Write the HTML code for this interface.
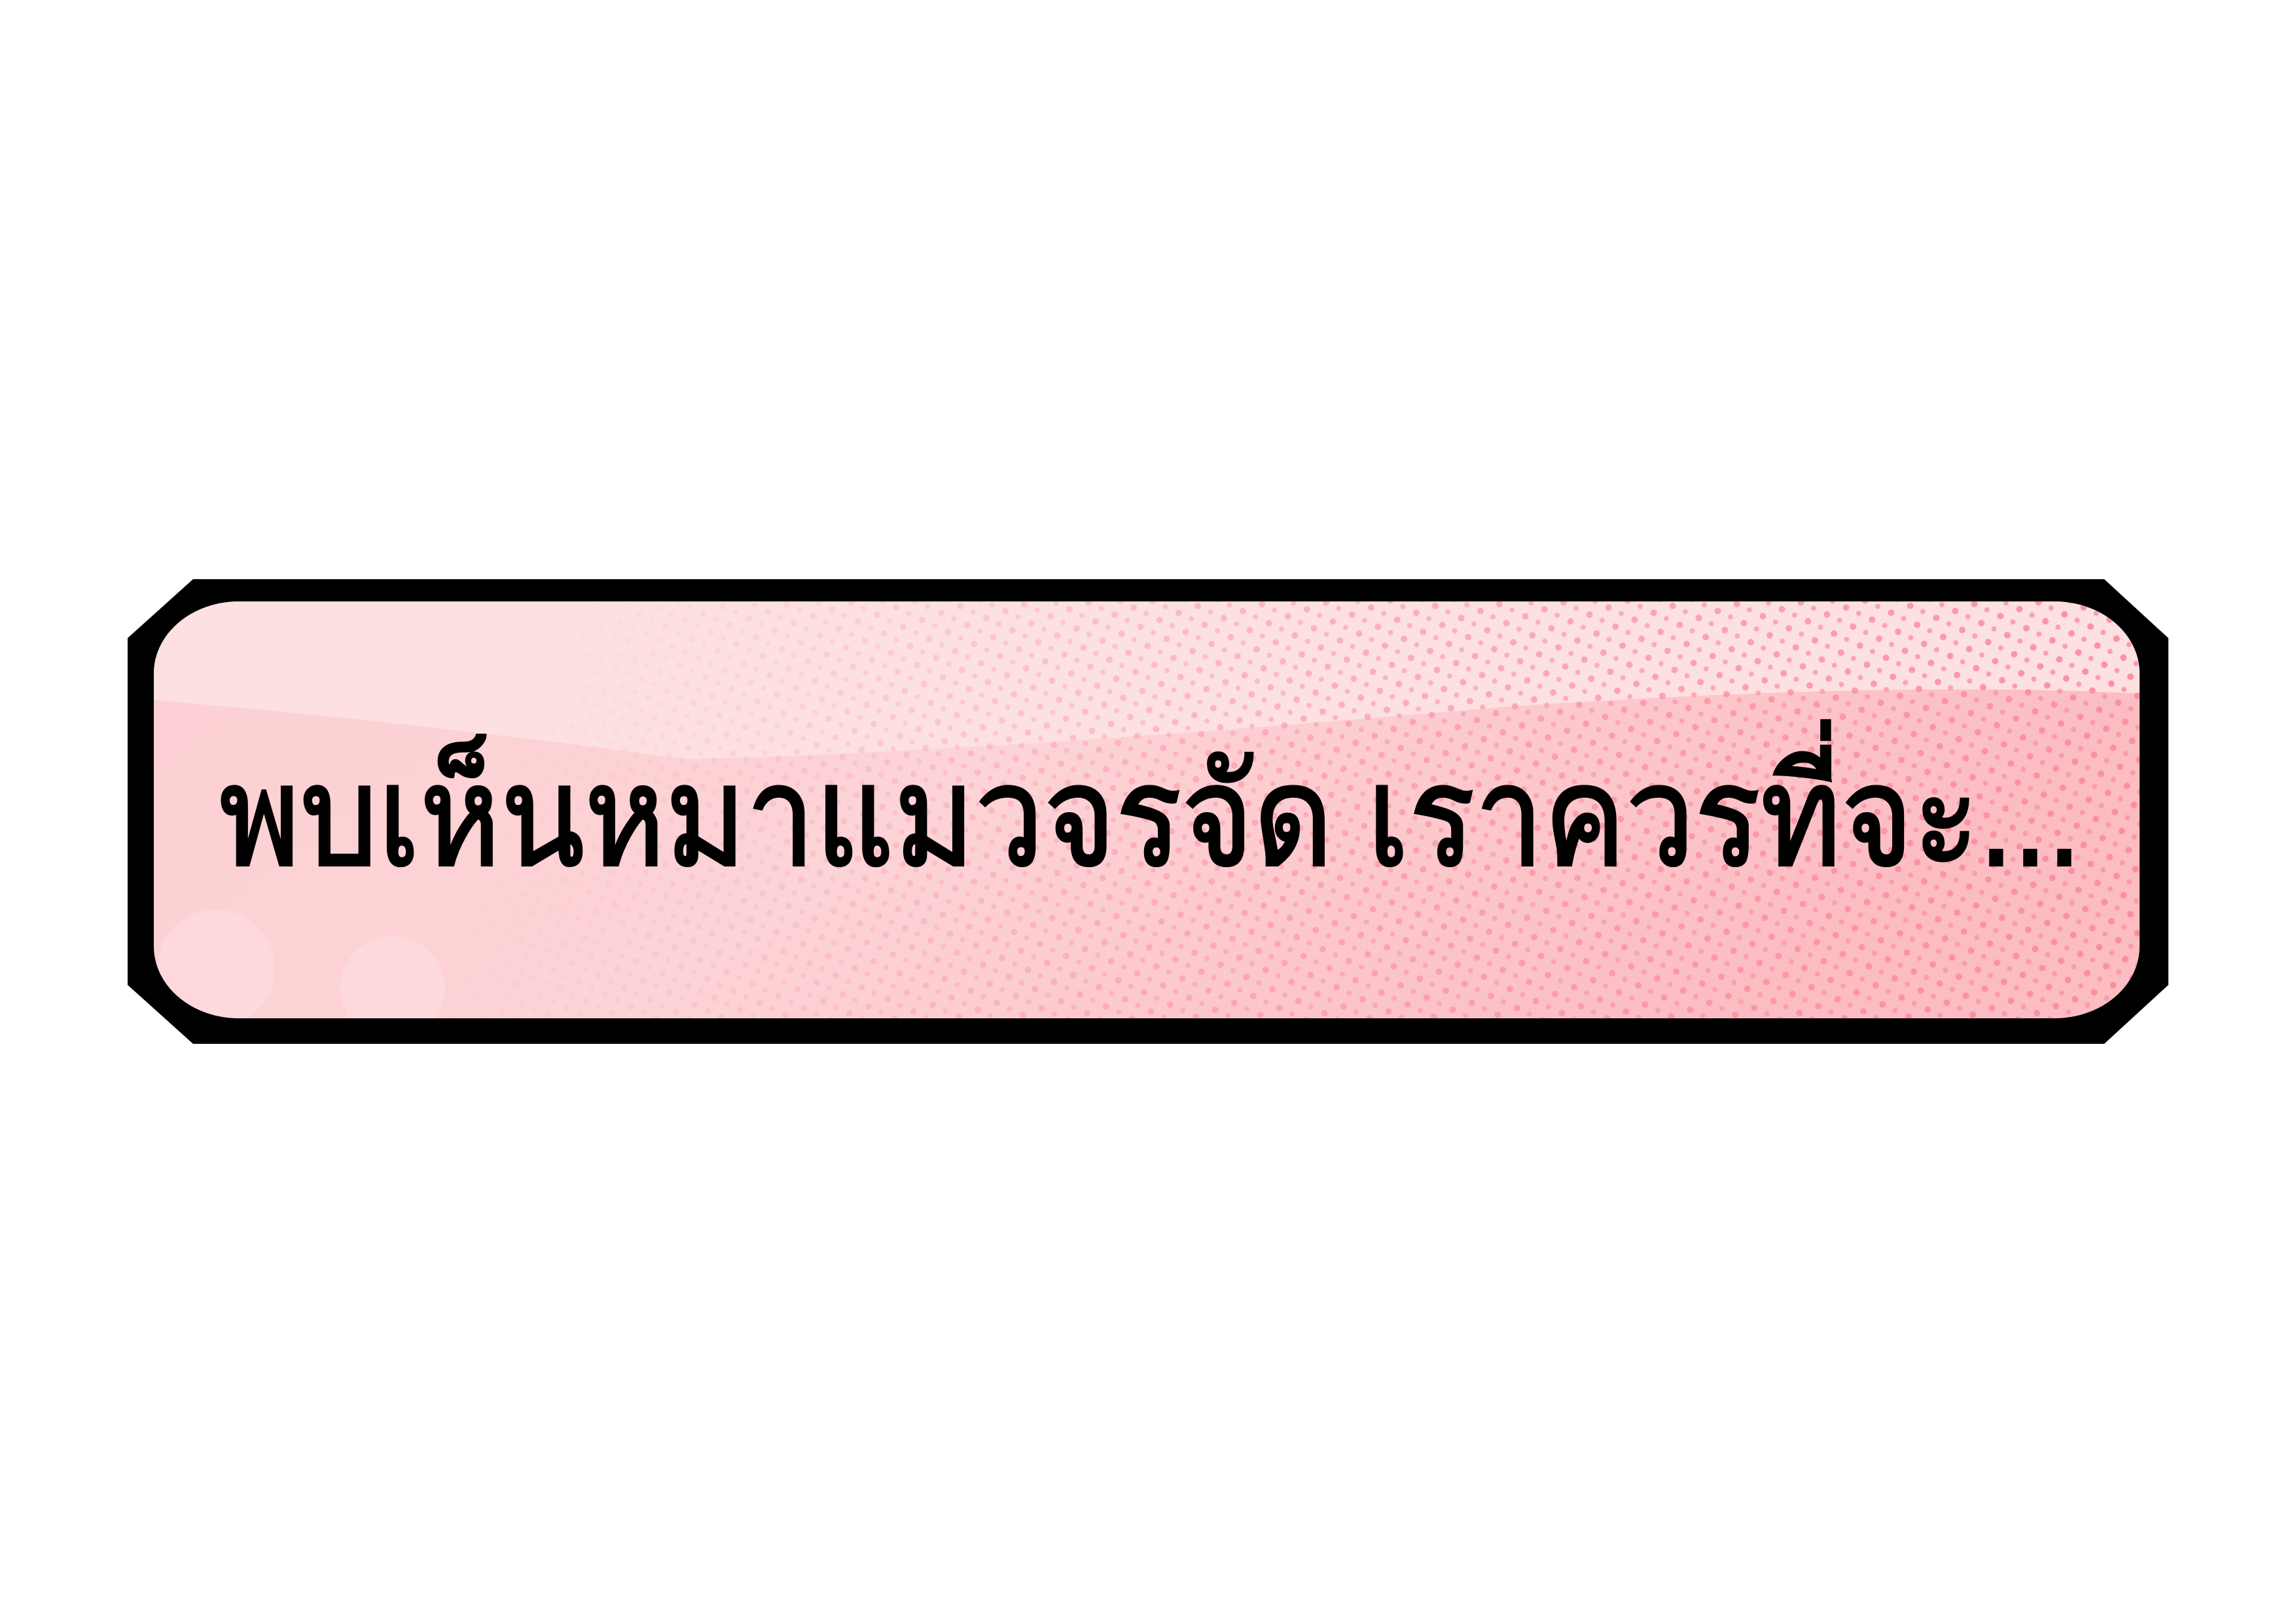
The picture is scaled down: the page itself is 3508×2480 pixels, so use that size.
<!DOCTYPE html>
<html><head><meta charset="utf-8"><style>
html,body{margin:0;padding:0;background:#fff;}
svg{display:block;}
</style></head><body>
<svg width="3508" height="2480" viewBox="0 0 3508 2480" xmlns="http://www.w3.org/2000/svg">
<defs>
<linearGradient id="bg" x1="0" y1="0" x2="1" y2="0.3">
<stop offset="0" stop-color="#fcd0d3"/>
<stop offset="0.5" stop-color="#fcd3d6"/>
<stop offset="1" stop-color="#fbbcc2"/>
</linearGradient>
<linearGradient id="dm" x1="0" y1="0" x2="1" y2="0.2">
<stop offset="0.3" stop-color="#fff" stop-opacity="0"/>
<stop offset="0.65" stop-color="#fff" stop-opacity="0.6"/>
<stop offset="1" stop-color="#fff" stop-opacity="1"/>
</linearGradient>
<mask id="m"><rect x="0" y="0" width="3508" height="2480" fill="url(#dm)"/></mask>
<pattern id="dots" width="31" height="31" patternUnits="userSpaceOnUse" patternTransform="rotate(-20)">
<circle cx="8" cy="8" r="5" fill="#fb8ea0"/>
<circle cx="23" cy="23" r="4" fill="#fa9aaa"/>
</pattern>
<clipPath id="c"><rect x="235" y="919" width="3034" height="637" rx="130" ry="110"/></clipPath>
</defs>
<polygon points="295,885 3215,885 3313,975 3313,1505 3215,1595 295,1595 195,1505 195,975" fill="#000"/>
<g clip-path="url(#c)">
<rect x="235" y="919" width="3034" height="637" fill="url(#bg)"/>
<path d="M235,919 L3269,919 L3269,1060 Q2900,1040 2300,1080 Q1500,1150 1050,1160 Q600,1100 235,1070 Z" fill="#fde0e2"/>
<rect x="235" y="919" width="3034" height="637" fill="url(#dots)" mask="url(#m)"/>
<circle cx="330" cy="1480" r="90" fill="#fddde0" opacity="0.6"/>
<circle cx="600" cy="1510" r="80" fill="#fddde0" opacity="0.6"/>
</g>
<text x="335" y="1322" textLength="2845" lengthAdjust="spacingAndGlyphs" font-family="'Liberation Sans', 'Noto Sans CJK SC', sans-serif" font-size="215" fill="#000" stroke="#000" stroke-width="4">พบเห็นหมาแมวจรจัด เราควรที่จะ...</text>
</svg>
</body></html>
